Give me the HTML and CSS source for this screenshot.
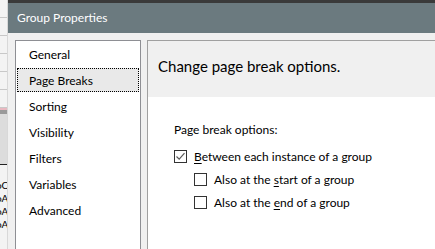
FILE: index.html
```html
<!DOCTYPE html>
<html lang="en">
<head>
    <meta charset="UTF-8">
    <meta name="viewport" content="width=device-width, initial-scale=1.0">
    <title>Group Properties</title>
    <link rel="stylesheet" href="styles.css">
</head>
<body>
    <div class="screen">

        <!-- Arkadaki rapor tasarımcısından görünen şerit -->
        <div class="app-strip">
            <div class="strip-grid"></div>
            <div class="strip-band"></div>
            <div class="strip-rows">
                <span>oC</span>
                <span>oA</span>
                <span>oA</span>
                <span>oA</span>
            </div>
        </div>

        <div class="dialog">
            <div class="title-bar">Group Properties</div>

            <div class="dialog-body">
                <!-- Sol menü -->
                <ul class="nav-list">
                    <li>General</li>
                    <li class="selected">Page Breaks</li>
                    <li>Sorting</li>
                    <li>Visibility</li>
                    <li>Filters</li>
                    <li>Variables</li>
                    <li>Advanced</li>
                </ul>

                <!-- Sağ panel -->
                <div class="page">
                    <div class="page-header">Change page break options.</div>
                    <div class="page-content">
                        <p class="group-label">Page break options:</p>

                        <label class="check">
                            <span class="box checked">
                                <svg width="11" height="11" viewBox="0 0 11 11"><path d="M1.5 5.5 L4.2 8.2 L9.5 2.2" fill="none" stroke="#5a5a5a" stroke-width="1.2"/></svg>
                            </span>
                            <span><u>B</u>etween each instance of a group</span>
                        </label>

                        <label class="check sub">
                            <span class="box"></span>
                            <span>Also at the <u>s</u>tart of a group</span>
                        </label>

                        <label class="check sub">
                            <span class="box"></span>
                            <span>Also at the <u>e</u>nd of a group</span>
                        </label>
                    </div>
                </div>
            </div>
        </div>
    </div>
</body>
</html>
```

FILE: styles.css
```css
body {
    margin: 0;
    padding: 0;
    font-family: 'Lato', 'Noto Sans', sans-serif;
    font-size: 12px;
    color: #000;
    background: #f0f0f0;
    overflow: hidden;
}

.screen {
    display: flex;
    width: 435px;
    height: 249px;
    overflow: hidden;
}

.app-strip {
    width: 7px;
    flex-shrink: 0;
    background: #f3f3f3;
    border-right: 1px solid #d8d8d8;
    display: flex;
    flex-direction: column;
    overflow: hidden;
}

.strip-grid {
    height: 108px;
    background: repeating-linear-gradient(to bottom, transparent 0, transparent 17px, #c8c8c8 17px, #c8c8c8 18px);
    border-bottom: 2px solid #e8b8c0;
}

.strip-band {
    height: 50px;
    background: #dcdcdc;
    border-top: 4px solid #9a9a9a;
    border-bottom: 1px solid #222;
}

.strip-rows {
    display: flex;
    flex-direction: column;
    padding-top: 14px;
    font-size: 10px;
    line-height: 13px;
    margin-left: -4px;
}

.dialog {
    flex: 1;
    display: flex;
    flex-direction: column;
    border-top: 3px solid #3a3a3a;
    background: #f0f0f0;
}

.title-bar {
    height: 30px;
    background: #6b7a7f;
    color: #fff;
    font-size: 12px;
    line-height: 30px;
    padding-left: 9px;
    flex-shrink: 0;
}

.dialog-body {
    flex: 1;
    display: flex;
    gap: 6px;
    padding: 7px 0 0 7px;
}

.nav-list {
    list-style: none;
    margin: 0;
    padding: 1px 1px 0;
    width: 122px;
    background: #fff;
    border: 1px solid #8e8f94;
    border-bottom: none;
    display: flex;
    flex-direction: column;
    gap: 2px;
}

.nav-list li {
    height: 24px;
    line-height: 24px;
    padding-left: 11px;
    border: 1px dotted transparent;
    box-sizing: border-box;
}

.nav-list li.selected {
    background: #e9e9e9;
    border-color: #000;
}

.page {
    flex: 1;
    display: flex;
    flex-direction: column;
    border-top: 1px solid #a0a0a0;
    border-left: 1px solid #a0a0a0;
}

.page-header {
    height: 56px;
    box-sizing: border-box;
    padding: 15px 0 0 10px;
    font-size: 15px;
    line-height: 20px;
    background: #f0f0f0;
}

.page-content {
    flex: 1;
    background: #fff;
    padding: 25px 0 0 26px;
}

.group-label {
    margin: 0 0 7px;
    line-height: 16px;
}

.check {
    display: flex;
    align-items: center;
    gap: 7px;
    height: 23px;
}

.check.sub {
    padding-left: 20px;
}

.box {
    width: 11px;
    height: 11px;
    border: 1px solid #333;
    background: #fff;
    display: flex;
    align-items: center;
    justify-content: center;
}

.check u {
    text-underline-offset: 2px;
}
```
